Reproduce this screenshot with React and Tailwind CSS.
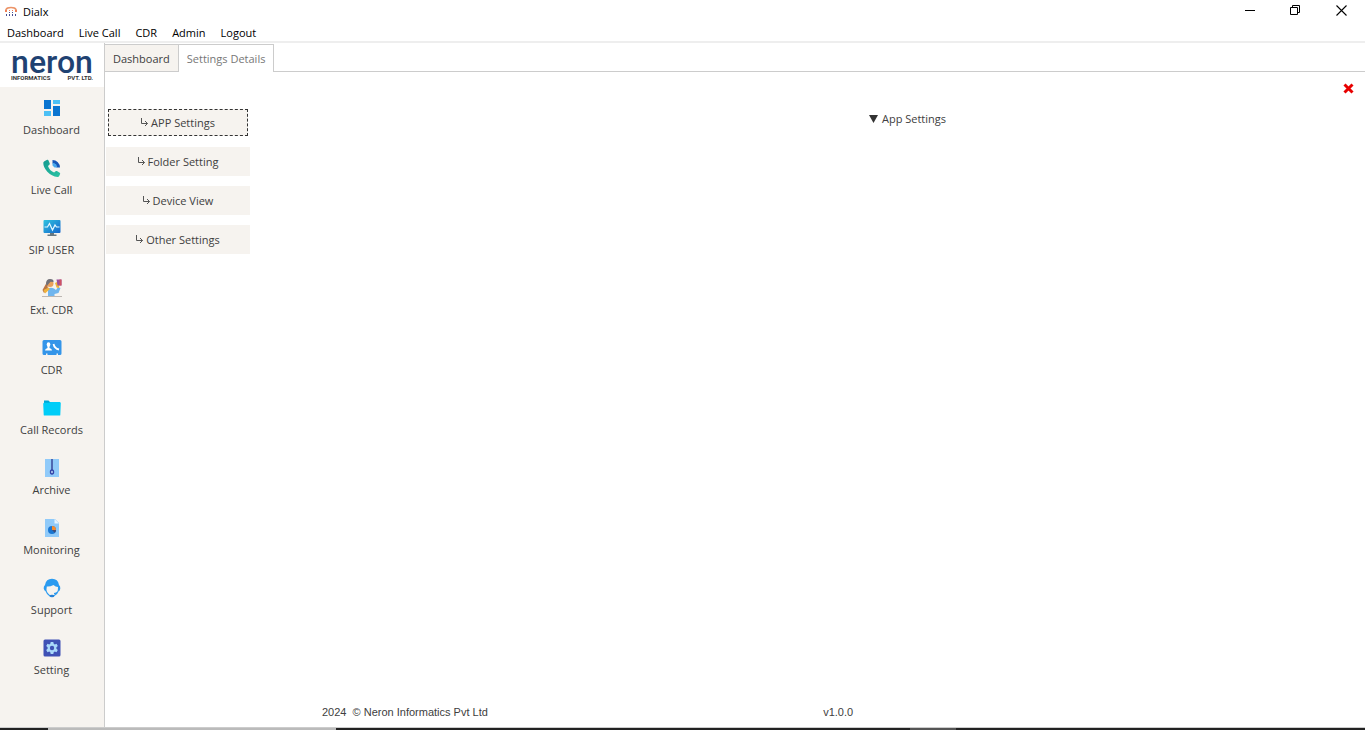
import React from "react";

const DashboardIcon = () => (
  <svg width="20" height="20" viewBox="0 0 20 20" aria-hidden="true">
    <path fill="#0a74d0" d="M2 2h7v9H2zM11 8h7v10h-7z" />
    <path fill="#4cc0f5" d="M11 2h7v4h-7zM2 13h7v5H2z" />
  </svg>
);

const LiveCallIcon = () => (
  <svg width="20" height="20" viewBox="0 0 20 20" aria-hidden="true">
    <defs>
      <linearGradient id="phone" x1="0" y1="0" x2="1" y2="1">
        <stop offset="0" stopColor="#149a90" />
        <stop offset="1" stopColor="#2cc4a4" />
      </linearGradient>
    </defs>
    <path
      fill="url(#phone)"
      d="M2.400 3.200 5.200 1.800q.8-.3 1.200.5l1.300 3q.4.8-.3 1.400L6 8q.8 2.600 2.500 4.200t3.600 2.300l1.500-1.300q.6-.5 1.300-.1l2.800 1.700q.7.4.4 1.200l-.9 2q-.5 1-1.600 1Q9.500 18.200 5.300 13.700 1.200 9.300 1.300 4.800q.1-1.100 1.100-1.600z"
    />
    <path fill="#1657b8" d="M10.500 2a7.500 7.500 0 0 1 7.500 7.500h-3.500a4 4 0 0 0-4-4z" />
    <path fill="#48a9ee" d="M10.500 5a4.500 4.500 0 0 1 4.500 4.500h-2.500l-2-2z" />
  </svg>
);

const SipIcon = () => (
  <svg width="20" height="20" viewBox="0 0 20 20" aria-hidden="true">
    <defs>
      <linearGradient id="screen" x1="0" y1="0" x2="1" y2="1">
        <stop offset="0" stopColor="#2fc3df" />
        <stop offset="1" stopColor="#1565cd" />
      </linearGradient>
    </defs>
    <rect x="1.500" y="2" width="17" height="13" rx="1" fill="url(#screen)" />
    <path fill="none" stroke="#e3f8ff" strokeWidth="1.200" d="M2.500 9h3l2-3.500 3 6.500 2.500-5 1.500 2h3" />
    <path fill="#667780" d="M8 15h4v1.500h2.500V18h-9v-1.500H8z" />
  </svg>
);

const ExtIcon = () => (
  <svg width="22" height="20" viewBox="0 0 22 20" aria-hidden="true">
    <path fill="#b97342" d="M6 4 1.500 12l1.500 3 4-4z" />
    <path fill="#6fb5ee" d="M7 10.500q3-1.500 6 0l2 1.500 2-3 2.500 1-2 5-4 1V18H7z" />
    <circle cx="9" cy="5.500" r="3.500" fill="#eaa05c" />
    <path fill="#717078" d="M5 6Q5 1 9 1t3.500 3L9.500 3.800 7.500 6 6 8z" />
    <path fill="#f0b33c" d="m2.500 12 5-2.500 1.500 1.500-5 4.500zM14 5l2-1 2.500 2-.5 4-2.500-.5z" />
    <path fill="#9a4e9c" d="M15.500 1.500h5v6h-4z" />
    <path fill="#cf5362" d="M18.500 1.500h2v6h-2z" />
    <path stroke="#bcb6b2" d="M1 18.500h20" />
  </svg>
);

const CdrIcon = () => (
  <svg width="20" height="20" viewBox="0 0 20 20" aria-hidden="true">
    <path fill="#3495e9" d="M2 2h16q1.500 0 1.500 1.500v12Q19.500 17 18 17h-2v-1.500h-1.500V17h-9v-1.500H4V17H2Q.5 17 .5 15.500v-12Q.5 2 2 2z" />
    <ellipse cx="6.500" cy="6.500" rx="1.800" ry="2.200" fill="#fff" />
    <path fill="#fff" d="M5.500 8h2v2q2.500.5 2.500 2.500H3Q3 10.500 5.500 10z" />
    <path fill="none" stroke="#fff" strokeWidth="1.800" d="M11.500 6q1 4.500 5.500 5.500" />
  </svg>
);

const FolderIcon = () => (
  <svg width="20" height="20" viewBox="0 0 20 20" aria-hidden="true">
    <path fill="#00a8d7" d="M2 2.500h4.500L8 4h9l1 1.500V10H2z" />
    <path fill="#00cdf8" d="M2 4.800h5L8.500 4H18l.8 1-.5 12q0 .5-.8.5H2.500q-.7 0-.8-.6L1.200 5.500z" />
  </svg>
);

const ArchiveIcon = () => (
  <svg width="20" height="20" viewBox="0 0 20 20" aria-hidden="true">
    <path fill="#90caf9" d="M3 1h14v18H3z" />
    <path stroke="#3e4f9f" strokeWidth="1.600" d="M10 1v12" />
    <ellipse cx="10" cy="14" rx="1.500" ry="2" fill="#c5e3fb" stroke="#3343a8" strokeWidth="1.400" />
  </svg>
);

const MonitoringIcon = () => (
  <svg width="20" height="20" viewBox="0 0 20 20" aria-hidden="true">
    <path fill="#90caf9" d="M3 1h10l4 4v14H3z" />
    <path fill="#e8f4fd" d="M12.500 1 17 5.500h-4.500z" />
    <circle cx="10" cy="12" r="4" fill="#1976d2" />
    <path fill="#f68a2c" d="M10 12V8a4 4 0 0 1 4 4z" />
    <path fill="#454b72" d="M10 12h4a4 4 0 0 1-1.200 2.800z" />
  </svg>
);

const SupportIcon = () => (
  <svg width="20" height="20" viewBox="0 0 20 20" aria-hidden="true">
    <path fill="#2b9bf0" d="M3 7Q4 .8 10 .8T17 7q1.500 1 1.300 3.500-.3 2.500-1.500 2.500l-1-.3.2-3.700q-2.500-.2-4.500-2Q8 8.800 4.800 8.500L4.300 13Q2 13 1.700 10.500 1.500 8 3 7z" />
    <path fill="none" stroke="#2b9bf0" strokeWidth="1.100" d="M3.500 12Q5 16 8 18h3.500q3.500-1.500 5-5.500M16 13.500Q14.500 15.500 12 15.500" />
    <ellipse cx="10" cy="18" rx="2.300" ry="1.300" fill="#2481d6" />
  </svg>
);

const SettingIcon = () => (
  <svg width="20" height="20" viewBox="0 0 20 20" aria-hidden="true">
    <rect x="1.500" y="1.500" width="17" height="17" rx="1.500" fill="#3f51b5" />
    <path
      fill="#a9d8fa"
      d="M8.700 4h2.600l.4 1.800 1.100.6 1.700-.6 1.300 2.300-1.400 1.200v1.400l1.400 1.200-1.300 2.300-1.700-.6-1.100.6-.4 1.800H8.700l-.4-1.800-1.100-.6-1.700.6-1.300-2.300 1.400-1.200V9.300L4.200 8.100l1.300-2.300 1.700.6 1.100-.6z"
    />
    <circle cx="10" cy="10" r="2.200" fill="#3f51b5" />
  </svg>
);

const AppIcon = () => (
  <svg width="12" height="12" viewBox="0 0 12 12" aria-hidden="true">
    <path fill="none" stroke="#ec9468" strokeWidth="1.600" d="M1 5V3.500Q2 1.500 6 1.500t5 2V5" />
    <path fill="#ec8056" d="M0 4h2v2H0zM10 4h2v2h-2zM4 4h1v1H4zM7 4h1v1H7z" />
    <path fill="#454b8f" d="M4 6h1v1H4zM7 6h1v1H7zM1 8h1v2H1zM4 8h1v2H4zM7 8h1v2H7zM10 8h1v2h-1z" />
  </svg>
);

const navItems = [
  ["Dashboard", DashboardIcon],
  ["Live Call", LiveCallIcon],
  ["SIP USER", SipIcon],
  ["Ext. CDR", ExtIcon],
  ["CDR", CdrIcon],
  ["Call Records", FolderIcon],
  ["Archive", ArchiveIcon],
  ["Monitoring", MonitoringIcon],
  ["Support", SupportIcon],
  ["Setting", SettingIcon],
];

const menus = ["Dashboard", "Live Call", "CDR", "Admin", "Logout"];
const sections = ["APP Settings", "Folder Setting", "Device View", "Other Settings"];

function TitleBar() {
  return (
    <header className="flex h-6 items-start justify-between pl-[5px] text-black">
      <div className="flex items-center gap-1.5 pt-[3px]">
        <AppIcon />
        <h1>Dialx</h1>
      </div>
      <div className="flex h-5">
        <button aria-label="Minimize" className="flex w-[45px] items-center justify-center">
          <svg width="11" height="11" viewBox="0 0 11 11"><path stroke="#000" d="M0 5.500h10" /></svg>
        </button>
        <button aria-label="Restore" className="flex w-[45px] items-center justify-center">
          <svg width="11" height="11" viewBox="0 0 11 11"><path fill="none" stroke="#000" d="M.5 2.500h7v7h-7zM2.500 2.500v-2h7v7h-2" /></svg>
        </button>
        <button aria-label="Close" className="flex w-[47px] items-center justify-center">
          <svg width="11" height="11" viewBox="0 0 11 11"><path stroke="#000" strokeWidth="1.100" d="m.5.5 10 10m0-10-10 10" /></svg>
        </button>
      </div>
    </header>
  );
}

function Sidebar() {
  return (
    <aside className="w-[105px] shrink-0 border-r border-[#ccc] bg-[#f6f3ef]">
      <div className="flex h-11 flex-col items-center bg-white pt-1.5 font-['Roboto',sans-serif]">
        <div className="h-[25px] text-[32px] leading-[26px] font-medium text-[#1f4272]">neron</div>
        <div className="flex w-[82px] justify-between text-[6px] leading-2 font-bold text-[#333]">
          <span>INFORMATICS</span>
          <span>PVT. LTD.</span>
        </div>
      </div>
      <nav className="flex flex-col">
        {navItems.map(([label, Icon]) => (
          <button key={label} className="flex h-[60px] flex-col items-center gap-[3px] pt-[11px] pr-px">
            <Icon />
            <span>{label}</span>
          </button>
        ))}
      </nav>
    </aside>
  );
}

export default function App() {
  return (
    <div className="flex min-h-screen flex-col bg-white font-['Open_Sans','Noto_Sans',sans-serif] text-[11px] leading-[18px] text-[#404040]">
      <TitleBar />
      <nav className="flex h-[19px] items-center gap-[15px] border-b-2 border-[#eee] pl-[7px] text-black">
        {menus.map((m) => (
          <button key={m}>{m}</button>
        ))}
      </nav>
      <div className="flex flex-1">
        <Sidebar />
        <main className="flex min-w-0 flex-1 flex-col">
          <div role="tablist" className="flex h-[29px] pt-px">
            <button role="tab" aria-selected="false" className="border-t border-r border-b border-[#ccc] bg-[#f6f3ef] px-2 pt-px">
              Dashboard
            </button>
            <button role="tab" aria-selected="true" className="border-t border-r border-[#ccc] px-2 text-[#777]">
              Settings Details
            </button>
            <div className="flex-1 border-b border-[#ccc]" />
          </div>
          <div className="flex justify-end px-[11px] pt-[11px]">
            <button aria-label="Close settings">
              <svg width="11" height="11" viewBox="0 0 11 11"><path stroke="#e80000" strokeWidth="3" d="m1.500 1.500 8 8m0-8-8 8" /></svg>
            </button>
          </div>
          <div className="flex pt-3.5">
            <div className="flex w-[145px] shrink-0 flex-col gap-2.5 pl-px">
              {sections.map((s, i) => (
                <button
                  key={s}
                  className={
                    i === 0
                      ? "mx-0.5 my-px h-[27px] border border-dashed border-[#333] bg-[#f6f3ef]"
                      : "h-[29px] bg-[#f6f3ef]"
                  }
                >
                  <span className="flex items-center justify-center gap-[3px]">
                    <svg width="7" height="9" viewBox="0 0 7 9" aria-hidden="true">
                      <path fill="none" stroke="#555" d="M.5 0v5.500h6M4 3l2.500 2.500L4 8" />
                    </svg>
                    {s}
                  </span>
                </button>
              ))}
            </div>
            <div className="flex flex-1 justify-center pt-0.5 pl-[200px]">
              <button className="flex h-[18px] items-center gap-1">
                <svg width="9" height="8" viewBox="0 0 9 8" aria-hidden="true"><path fill="#333" d="M0 0h9L4.500 8z" /></svg>
                App Settings
              </button>
            </div>
          </div>
          <footer className="mt-auto grid grid-cols-[minmax(0,2fr)_minmax(0,3fr)] pb-1.5 pl-[217px] font-['Liberation_Sans',sans-serif] text-[11px]">
            <span className="whitespace-pre">2024  © Neron Informatics Pvt Ltd</span>
            <span className="pl-[84px]">v1.0.0</span>
          </footer>
        </main>
      </div>
      <div className="flex h-[3px] border-t border-[#ccc] bg-[#222]">
        <div className="w-12" />
        <div className="w-72 bg-[#bbb]" />
        <div className="flex-1" />
        <div className="w-[46px] bg-[#555]" />
        <div className="w-[30%]" />
      </div>
    </div>
  );
}
